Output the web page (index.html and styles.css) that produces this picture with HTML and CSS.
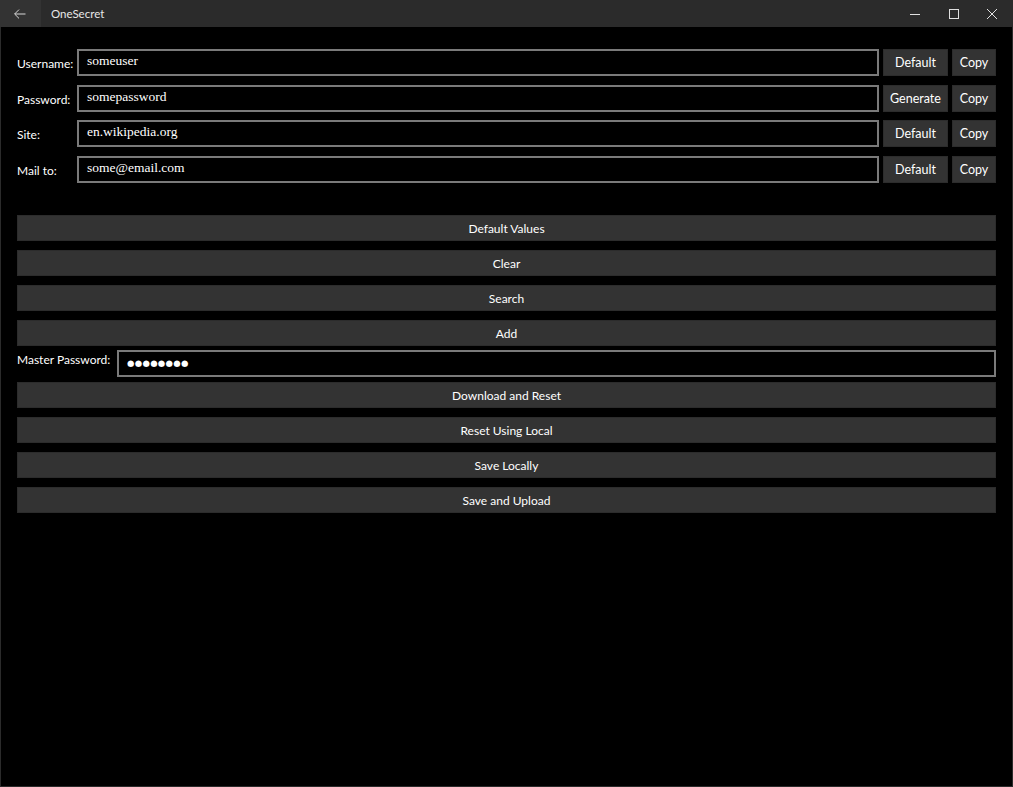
FILE: index.html
```html
<!DOCTYPE html>
<html lang="en">
<head>
<meta charset="utf-8">
<title>OneSecret</title>
<link rel="stylesheet" href="styles.css">
</head>
<body>
<div class="window">
  <header class="titlebar">
    <div class="back">
      <svg width="12" height="10" viewBox="0 0 12 10"><path d="M11.5 5H0.8M5 0.6L0.6 5L5 9.4" fill="none" stroke="#d8d8d8" stroke-width="1"/></svg>
    </div>
    <div class="title">OneSecret</div>
    <div class="controls">
      <div class="ctl"><svg width="10" height="10" viewBox="0 0 10 10"><path d="M0 5.5H10" stroke="#e0e0e0" stroke-width="1"/></svg></div>
      <div class="ctl"><svg width="10" height="10" viewBox="0 0 10 10"><rect x="0.5" y="0.5" width="9" height="9" fill="none" stroke="#e0e0e0" stroke-width="1"/></svg></div>
      <div class="ctl"><svg width="10" height="10" viewBox="0 0 10 10"><path d="M0 0L10 10M10 0L0 10" stroke="#e0e0e0" stroke-width="1"/></svg></div>
    </div>
  </header>
  <main class="content">
    <div class="fields">
      <label class="lbl">Username:</label>
      <div class="tb">someuser</div>
      <button class="btn">Default</button>
      <button class="btn">Copy</button>

      <label class="lbl">Password:</label>
      <div class="tb">somepassword</div>
      <button class="btn">Generate</button>
      <button class="btn">Copy</button>

      <label class="lbl">Site:</label>
      <div class="tb">en.wikipedia.org</div>
      <button class="btn">Default</button>
      <button class="btn">Copy</button>

      <label class="lbl">Mail to:</label>
      <div class="tb">some@email.com</div>
      <button class="btn">Default</button>
      <button class="btn">Copy</button>
    </div>

    <div class="actions">
      <button class="wide">Default Values</button>
      <button class="wide">Clear</button>
      <button class="wide">Search</button>
      <button class="wide">Add</button>
    </div>

    <div class="master">
      <label class="mlbl">Master Password:</label>
      <div class="tb pw">●●●●●●●●</div>
    </div>

    <div class="actions">
      <button class="wide">Download and Reset</button>
      <button class="wide">Reset Using Local</button>
      <button class="wide">Save Locally</button>
      <button class="wide">Save and Upload</button>
    </div>
  </main>
</div>
</body>
</html>
```
FILE: styles.css
```css
* { box-sizing: border-box; }
html, body {
  margin: 0;
  padding: 0;
  background: #000;
  height: 100%;
}
body {
  font-family: "Lato", "Noto Sans", sans-serif;
  font-size: 12px;
  color: #fff;
}
.window {
  height: 787px;
  border: 1px solid #2b2b2b;
  border-top: none;
  background: #000;
  display: flex;
  flex-direction: column;
}
.titlebar {
  height: 27px;
  background: #2b2b2b;
  display: flex;
  align-items: center;
  flex-shrink: 0;
  margin: 0 -1px;
}
.back {
  width: 41px;
  height: 27px;
  background: #333;
  display: flex;
  align-items: center;
  justify-content: center;
  padding-right: 1px;
}
.title {
  margin-left: 10px;
  font-size: 11.5px;
  color: #e8e8e8;
  flex: 1;
}
.controls {
  display: flex;
  height: 27px;
}
.ctl {
  width: 39px;
  height: 27px;
  display: flex;
  align-items: center;
  justify-content: center;
}
.ctl:last-child { width: 40px; padding-right: 2px; }
.content {
  padding: 22px 16px 0 16px;
}
.fields {
  display: grid;
  grid-template-columns: 56px 1fr 65px 44px;
  column-gap: 4px;
  row-gap: 8.5px;
  grid-auto-rows: 27px;
}
.lbl {
  display: flex;
  align-items: center;
  padding-top: 2px;
  white-space: nowrap;
}
.tb {
  border: 2px solid #7a7a7a;
  background: #000;
  font-family: "Liberation Serif", "DejaVu Serif", serif;
  font-size: 13.5px;
  color: #fff;
  padding: 2px 8px 0 8px;
  height: 27px;
  line-height: 16px;
}
.btn, .wide {
  background: #333;
  border: 1px solid #2c2c2c;
  color: #fff;
  font-family: "Lato", "Noto Sans", sans-serif;
  font-size: 12.5px;
  padding: 0;
  margin: 0;
  height: 27px;
}
.actions {
  display: flex;
  flex-direction: column;
  gap: 9px;
}
.actions .wide { height: 26px; font-size: 12px; }
.fields + .actions { margin-top: 32.5px; }
.master {
  display: flex;
  gap: 4px;
  margin: 4px 0 5px 0;
}
.mlbl {
  width: 96px;
  padding-top: 2px;
  white-space: nowrap;
}
.master .tb { flex: 1; }
.pw {
  font-family: "DejaVu Sans", sans-serif;
  font-size: 8.5px;
  letter-spacing: 0.3px;
  padding: 3px 8px 0 8px;
  line-height: 16px;
}
```
